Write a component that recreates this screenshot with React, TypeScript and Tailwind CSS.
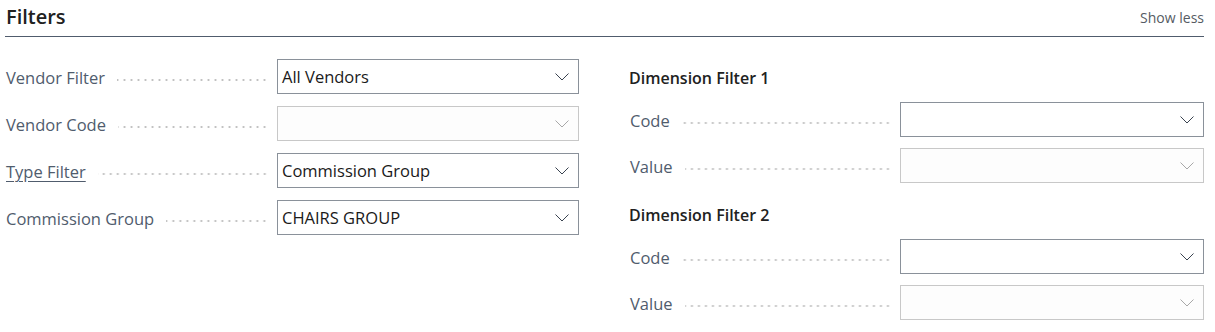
import React from "react";

function Chevron({ disabled }: { disabled?: boolean }) {
  return (
    <svg width="14" height="8" viewBox="0 0 14 8" className={disabled ? "text-[#a8a8a8]" : "text-[#3a4350]"}>
      <path d="M0.5 0.5 L7 7 L13.5 0.5" fill="none" stroke="currentColor" strokeWidth="1" />
    </svg>
  );
}

function Box({ value, disabled }: { value?: string; disabled?: boolean }) {
  return (
    <div
      className={
        "flex h-[35px] w-full items-center justify-between border pl-[4px] pr-[9px] " +
        (disabled ? "border-[#c8c8c8] bg-[#fdfdfd]" : "border-[#8a919a] bg-white")
      }
    >
      <span className="pt-[2px] text-[16.5px] text-[#1a1a1a]">{value ?? ""}</span>
      <Chevron disabled={disabled} />
    </div>
  );
}

function Dots() {
  return (
    <div className="ml-[12px] mr-[9px] mt-[6px] h-[2px] flex-1 bg-[radial-gradient(circle,#c0c0c0_1px,transparent_1.2px)] bg-[length:7px_2px] bg-right bg-repeat-x" />
  );
}

function Row({
  label,
  value,
  disabled,
  link,
  labelWidth,
}: {
  label: string;
  value?: string;
  disabled?: boolean;
  link?: boolean;
  labelWidth: string;
}) {
  return (
    <div className="flex h-[35px] items-center">
      <div className={"flex items-center " + labelWidth}>
        <span
          className={
            "whitespace-nowrap pl-[1px] pt-[4px] text-[16.5px] text-[#505c6d] " +
            (link ? "underline underline-offset-[3px]" : "")
          }
        >
          {label}
        </span>
        <Dots />
      </div>
      <div className="flex-1">
        <Box value={value} disabled={disabled} />
      </div>
    </div>
  );
}

export default function App() {
  return (
    <div className="h-[332px] w-[1215px] bg-white pl-[5px] pr-[11px] font-['Segoe_UI','Open_Sans',sans-serif]">
      <div className="flex h-[37px] items-center justify-between border-b border-[#505c6d] pb-[2px]">
        <span className="pl-[1px] text-[20px] font-semibold text-[#212121]">Filters</span>
        <span className="text-[14px] text-[#555b63]">Show less</span>
      </div>
      <div className="flex pt-[22px]">
        <div className="flex w-[574px] flex-col gap-[12px]">
          <Row label="Vendor Filter" value="All Vendors" labelWidth="w-[272px]" />
          <Row label="Vendor Code" disabled labelWidth="w-[272px]" />
          <Row label="Type Filter" value="Commission Group" link labelWidth="w-[272px]" />
          <Row label="Commission Group" value="CHAIRS GROUP" labelWidth="w-[272px]" />
        </div>
        <div className="ml-[50px] flex w-[575px] flex-col">
          <div className="flex h-[36px] items-center pt-[1px] text-[16px] font-semibold text-[#212121]">Dimension Filter 1</div>
          <div className="mt-[7px] flex flex-col gap-[11px]">
            <Row label="Code" labelWidth="w-[271px]" />
            <Row label="Value" disabled labelWidth="w-[271px]" />
          </div>
          <div className="mt-[13px] flex h-[36px] items-center pt-[1px] text-[16px] font-semibold text-[#212121]">Dimension Filter 2</div>
          <div className="mt-[7px] flex flex-col gap-[11px]">
            <Row label="Code" labelWidth="w-[271px]" />
            <Row label="Value" disabled labelWidth="w-[271px]" />
          </div>
        </div>
      </div>
    </div>
  );
}
